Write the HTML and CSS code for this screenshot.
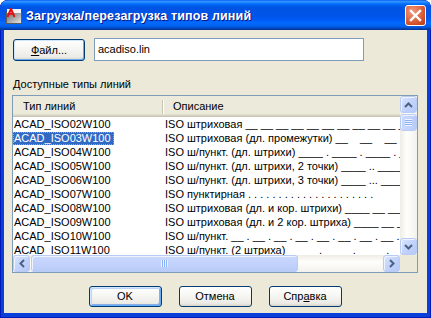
FILE: index.html
```html
<!DOCTYPE html>
<html lang="ru">
<head>
<meta charset="utf-8">
<title>Загрузка/перезагрузка типов линий</title>
<link rel="stylesheet" href="styles.css">
</head>
<body>
<div class="window">
  <div class="titlebar">
    <svg class="app-icon" width="16" height="16" viewBox="0 0 16 16">
      <defs>
        <linearGradient id="ig" x1="0" y1="0" x2="1" y2="1">
          <stop offset="0" stop-color="#6e6e6e"/>
          <stop offset="0.5" stop-color="#a9a9a9"/>
          <stop offset="1" stop-color="#e8e8e8"/>
        </linearGradient>
      </defs>
      <rect x="0.5" y="4.5" width="15" height="11" fill="url(#ig)" stroke="#5a5a5a"/>
      <rect x="1" y="1" width="14" height="4" fill="#f4f4f4"/>
      <path d="M1.5 9 L5 0.8 L8.5 9 M3 5.8 H7" fill="none" stroke="#e01010" stroke-width="2"/>
    </svg>
    <span class="title">Загрузка/перезагрузка типов линий</span>
    <div class="close">
      <svg width="13" height="13" viewBox="0 0 13 13"><path d="M2 2 L11 11 M11 2 L2 11" stroke="#fff" stroke-width="2.4" stroke-linecap="square"/></svg>
    </div>
  </div>
  <div class="client">
    <div class="file-row">
      <div class="btn btn-file"><span><u>Ф</u>айл...</span></div>
      <div class="input">acadiso.lin</div>
    </div>
    <div class="label">Доступные типы линий</div>
    <div class="listview">
      <div class="lv-main">
        <div class="lv-header">
          <div class="hcol h1">Тип линий</div>
          <div class="hcol h2">Описание</div>
        </div>
        <div class="lv-rows">
          <div class="row"><span class="c1">ACAD_ISO02W100</span><span class="c2">ISO штриховая __ __ __ __ __ __ __ __ __ __ __ __ __ __</span></div>
          <div class="row"><span class="c1"><span class="sel">ACAD_ISO03W100</span></span><span class="c2">ISO штриховая (дл. промежутки) __    __    __    __</span></div>
          <div class="row"><span class="c1">ACAD_ISO04W100</span><span class="c2">ISO ш/пункт. (дл. штрихи) ____ . ____ . ____ . ____</span></div>
          <div class="row"><span class="c1">ACAD_ISO05W100</span><span class="c2">ISO ш/пункт. (дл. штрихи, 2 точки) ____ .. ____ .. ____</span></div>
          <div class="row"><span class="c1">ACAD_ISO06W100</span><span class="c2">ISO ш/пункт. (дл. штрихи, 3 точки) ____ ... ____ ... ____</span></div>
          <div class="row"><span class="c1">ACAD_ISO07W100</span><span class="c2">ISO пунктирная . . . . . . . . . . . . . . . . . . . . .</span></div>
          <div class="row"><span class="c1">ACAD_ISO08W100</span><span class="c2">ISO штриховая (дл. и кор. штрихи) ____ __ ____ __ ____</span></div>
          <div class="row"><span class="c1">ACAD_ISO09W100</span><span class="c2">ISO штриховая (дл. и 2 кор. штриха) ____ __ __ ____ __</span></div>
          <div class="row"><span class="c1">ACAD_ISO10W100</span><span class="c2">ISO ш/пункт. __ . __ . __ . __ . __ . __ . __ . __ . __</span></div>
          <div class="row"><span class="c1">ACAD_ISO11W100</span><span class="c2">ISO ш/пункт. (2 штриха)           .          .          .          .</span></div>
        </div>
      </div>
      <div class="vscroll">
        <div class="sb-btn">
          <svg width="9" height="6" viewBox="0 0 9 6"><path d="M1 5 L4.5 1.5 L8 5" fill="none" stroke="#4d6185" stroke-width="2"/></svg>
        </div>
        <div class="vthumb"><span class="grip-v"></span></div>
        <div class="vtrack"></div>
        <div class="sb-btn">
          <svg width="9" height="6" viewBox="0 0 9 6"><path d="M1 1 L4.5 4.5 L8 1" fill="none" stroke="#4d6185" stroke-width="2"/></svg>
        </div>
      </div>
      <div class="hscroll">
        <div class="sb-btn">
          <svg width="6" height="9" viewBox="0 0 6 9"><path d="M5 1 L1.5 4.5 L5 8" fill="none" stroke="#4d6185" stroke-width="2"/></svg>
        </div>
        <div class="hthumb"><span class="grip-h"></span></div>
        <div class="htrack"></div>
        <div class="sb-btn">
          <svg width="6" height="9" viewBox="0 0 6 9"><path d="M1 1 L4.5 4.5 L1 8" fill="none" stroke="#4d6185" stroke-width="2"/></svg>
        </div>
      </div>
      <div class="corner"></div>
    </div>
    <div class="buttons">
      <div class="btn btn-default"><span>OK</span></div>
      <div class="btn"><span>Отмена</span></div>
      <div class="btn"><span>Спр<u>а</u>вка</span></div>
    </div>
  </div>
</div>
</body>
</html>
```

FILE: styles.css
```css
html, body {
  margin: 0;
  padding: 0;
  width: 431px;
  height: 318px;
  overflow: hidden;
  background: #ffffff;
}

.window {
  width: 431px;
  height: 318px;
  box-sizing: border-box;
  display: flex;
  flex-direction: column;
  background: #0a3fd9;
  border-radius: 8px 8px 0 0;
  overflow: hidden;
  box-shadow: inset 1px 0 0 #0019b8, inset -1px 0 0 #0019b8, inset 0 -1px 0 #0019b8;
  font-family: "Liberation Sans", Arial, sans-serif;
  font-size: 11px;
  color: #000;
}

/* ---------- title bar ---------- */
.titlebar {
  height: 30px;
  flex: 0 0 30px;
  display: flex;
  align-items: center;
  padding: 0 5px 0 5px;
  box-sizing: border-box;
  background: linear-gradient(#0058ee 0%, #3593ff 4%, #288eff 7%, #127dff 10%, #036ffc 13%, #0262ee 17%, #0057e5 23%, #0054e3 28%, #0055eb 56%, #005bf5 66%, #026afe 76%, #0062ef 86%, #0052d6 92%, #0040ab 96%, #003092 100%);
  border-radius: 8px 8px 0 0;
}

.app-icon {
  flex: 0 0 16px;
  margin: 1px 0 0 1px;
}

.title {
  flex: 1;
  margin-left: 4px;
  color: #fff;
  font-family: "Liberation Sans", Arial, sans-serif;
  font-weight: bold;
  font-size: 12.5px;
  letter-spacing: 0.15px;
  text-shadow: 1px 1px 0 #0a1883;
  white-space: nowrap;
  padding-top: 1px;
}

.close {
  width: 21px;
  height: 21px;
  box-sizing: border-box;
  border: 1px solid #fff;
  border-radius: 3px;
  background: radial-gradient(circle at 35% 30%, #ef9a7d 0%, #e3704d 40%, #cc4a24 75%, #b53a17 100%);
  display: flex;
  align-items: center;
  justify-content: center;
  margin-right: 0;
}

/* ---------- client ---------- */
.client {
  flex: 1;
  margin: 0 4px 5px 4px;
  background: #ece9d8;
  padding: 8px 9px 0 8px;
  display: flex;
  flex-direction: column;
}

.file-row {
  display: flex;
  align-items: flex-start;
  margin-left: 1px;
  height: 23px;
}

.btn {
  width: 73px;
  height: 21px;
  box-sizing: border-box;
  border: 1px solid #003c74;
  border-radius: 3px;
  background: linear-gradient(#ffffff 0%, #f7f7f4 40%, #ecebe6 85%, #d8d2c6 100%);
  display: flex;
  align-items: center;
  justify-content: center;
  font-size: 11px;
}

.btn span {
  line-height: 13px;
}

.btn-file {
  width: 72px;
  height: 22px;
  margin-top: 1px;
  box-shadow: inset 1px 1px 0 #cee7ff, inset -1px -1px 0 #69acf6;
}

.input {
  margin-left: 9px;
  width: 270px;
  height: 23px;
  box-sizing: border-box;
  border: 1px solid #7f9db9;
  background: #fff;
  padding-left: 3px;
  line-height: 21px;
  font-size: 11px;
}

.label {
  margin: 17px 0 0 1px;
  height: 13px;
  line-height: 13px;
}

/* ---------- list view ---------- */
.listview {
  margin-top: 4px;
  width: 406px;
  height: 178px;
  box-sizing: border-box;
  border: 1px solid #7f9db9;
  background: #fff;
  display: grid;
  grid-template-columns: 1fr 17px;
  grid-template-rows: 1fr 17px;
}

.lv-main {
  overflow: hidden;
  min-width: 0;
}

.lv-header {
  height: 21px;
  display: flex;
  background: #ebeadb;
  box-shadow: inset 0 -1px 0 #cbc7b8, inset 0 -2px 0 #d6d2c2, inset 0 -3px 0 #e2decd;
}

.hcol {
  line-height: 20px;
  padding-left: 10px;
  box-sizing: border-box;
  white-space: nowrap;
}

.h1 {
  width: 150px;
  position: relative;
}

.h1::after {
  content: "";
  position: absolute;
  right: 0;
  top: 4px;
  height: 14px;
  width: 1px;
  background: #c7c5b2;
  box-shadow: 1px 0 0 #fff;
}

.h2 {
  flex: 1;
}

.lv-rows {
  padding-top: 0;
}

.row {
  height: 14px;
  line-height: 14px;
  display: flex;
  white-space: pre;
}

.c1 {
  flex: 0 0 150px;
  padding-left: 1px;
  box-sizing: border-box;
}

.c2 {
  flex: 1;
  padding-left: 2px;
  overflow: hidden;
}

.sel {
  display: inline-block;
  margin: 1px 0 0 -1px;
  padding: 0 3px 0 1px;
  height: 13px;
  line-height: 12px;
  background: #316ac5;
  color: #fff;
  outline: 1px dotted #cea24d;
  outline-offset: -1px;
  vertical-align: top;
}

/* ---------- scroll bars ---------- */
.vscroll {
  display: flex;
  flex-direction: column;
  background: linear-gradient(to right, #eeede5, #fefefb 40%, #f3f1ec);
}

.hscroll {
  display: flex;
  background: linear-gradient(#eeede5, #fefefb 40%, #f3f1ec);
}

.sb-btn {
  flex: 0 0 17px;
  width: 17px;
  height: 17px;
  box-sizing: border-box;
  border: 1px solid #b8cbf5;
  border-radius: 3px;
  background: linear-gradient(135deg, #dbe6fd 0%, #c4d5fc 45%, #b5c8f6 100%);
  box-shadow: inset 1px 1px 0 #eef3fe;
  display: flex;
  align-items: center;
  justify-content: center;
}

.vthumb, .hthumb {
  box-sizing: border-box;
  border: 1px solid #b8cbf5;
  border-radius: 3px;
  background: linear-gradient(to right, #c9d8fc, #c3d3fd 50%, #b8cbf6);
  box-shadow: inset 1px 1px 0 #eef3fe;
  display: flex;
  align-items: center;
  justify-content: center;
}

.vthumb {
  flex: 0 0 17px;
  margin-top: 1px;
}

.hthumb {
  flex: 0 0 267px;
  margin-left: 1px;
  background: linear-gradient(#c9d8fc, #c3d3fd 50%, #b8cbf6);
}

.vtrack, .htrack {
  flex: 1;
}

.grip-v {
  width: 7px;
  height: 7px;
  background: repeating-linear-gradient(#eef4fe 0 1px, #8cb0f8 1px 2px);
}

.grip-h {
  width: 7px;
  height: 7px;
  background: repeating-linear-gradient(to right, #eef4fe 0 1px, #8cb0f8 1px 2px);
}

.corner {
  background: #ece9d8;
}

/* ---------- bottom buttons ---------- */
.buttons {
  margin-top: 13px;
  display: flex;
  justify-content: center;
  gap: 17px;
}

.btn-default {
  box-shadow: inset 1px 1px 0 #cee7ff, inset -1px -1px 0 #69acf6, inset 2px 2px 0 #bcd4f6, inset -2px -2px 0 #89ade4;
}
```
